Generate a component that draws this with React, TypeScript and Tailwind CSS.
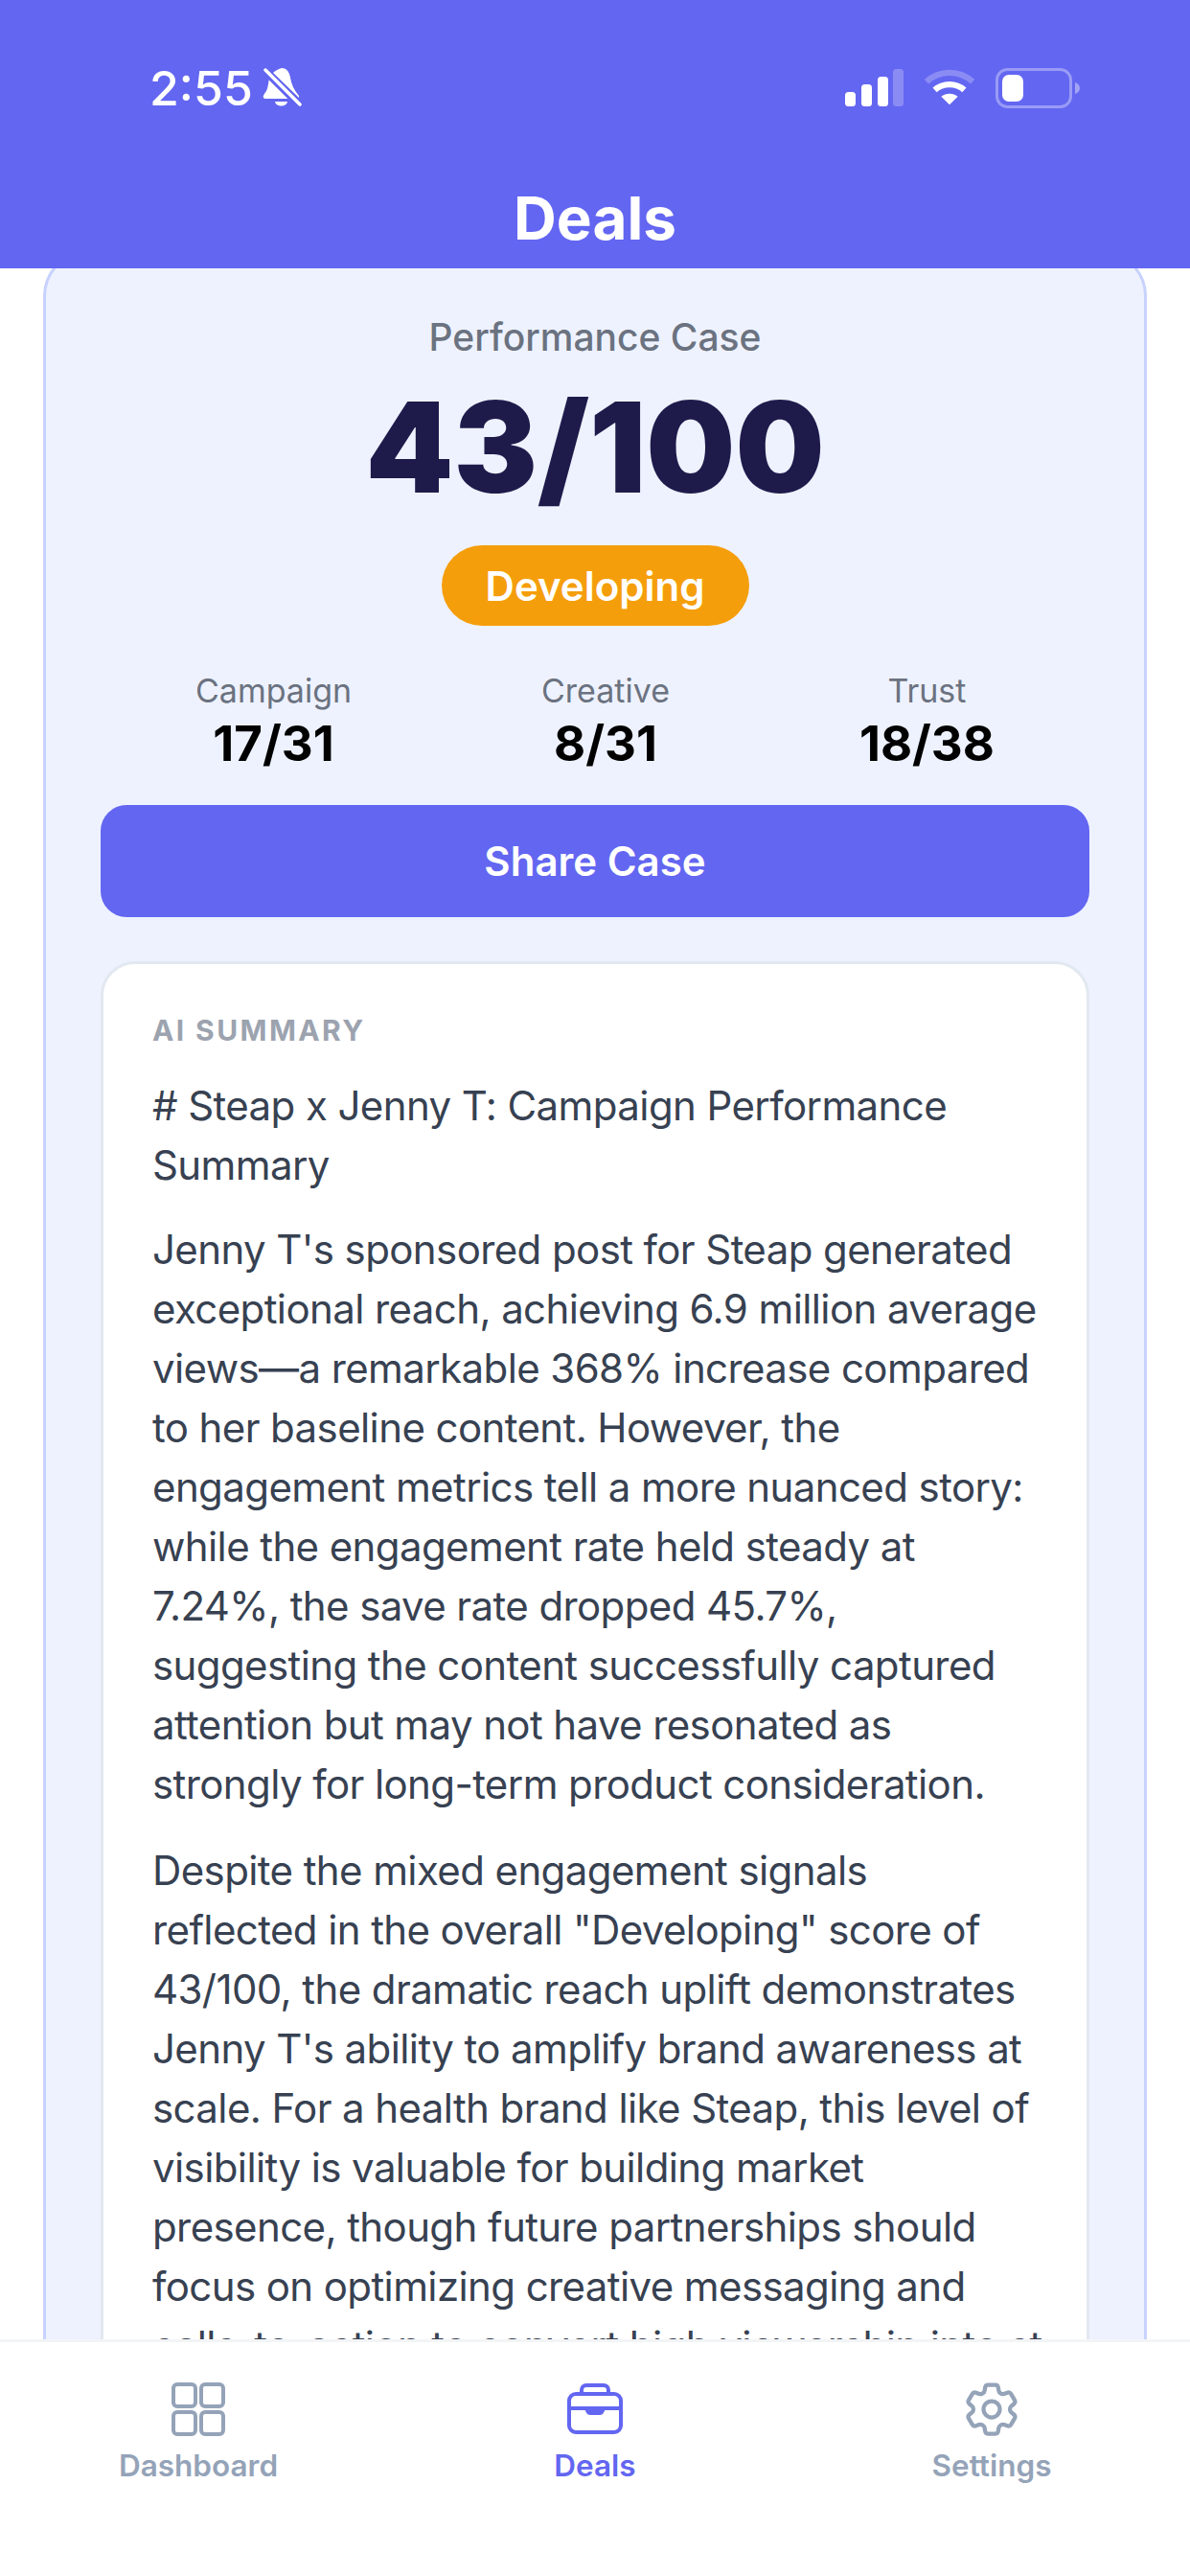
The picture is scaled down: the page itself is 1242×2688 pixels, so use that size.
import React from "react";
import { HiOutlineCog6Tooth } from "react-icons/hi2";

const p1 = "Jenny T's sponsored post for Steap generated exceptional reach, achieving 6.9 million average views—a remarkable 368% increase compared to her baseline content. However, the engagement metrics tell a more nuanced story: while the engagement rate held steady at 7.24%, the save rate dropped 45.7%, suggesting the content successfully captured attention but may not have resonated as strongly for long-term product consideration.";
const p2 = "Despite the mixed engagement signals reflected in the overall \"Developing\" score of 43/100, the dramatic reach uplift demonstrates Jenny T's ability to amplify brand awareness at scale. For a health brand like Steap, this level of visibility is valuable for building market presence, though future partnerships should focus on optimizing creative messaging and calls-to-action to convert high viewership into st";

function Stat({ label, value }: { label: string; value: string }) {
  return (
    <div className="flex flex-col items-center">
      <span className="text-[34px] leading-[40px] text-[#6b7280] mt-[2px]">{label}</span>
      <span className="text-[51px] leading-[62px] font-bold text-black mt-[4px]">{value}</span>
    </div>
  );
}

function Tab({ icon, label, active }: { icon: React.ReactNode; label: string; active?: boolean }) {
  return (
    <div className={`flex-1 flex flex-col items-center ${active ? "text-[#6366f1]" : "text-[#94a3b8]"}`}>
      <div className="h-[72px] flex items-center justify-center">{icon}</div>
      <span className="text-[31.5px] leading-[36px] font-semibold mt-[5px]">{label}</span>
    </div>
  );
}

function GridIcon() {
  return (
    <svg width="56" height="56" viewBox="0 0 56 56" fill="none" stroke="currentColor" strokeWidth="4">
      <rect x="2" y="2" width="23" height="23" rx="4" />
      <rect x="31" y="2" width="23" height="23" rx="4" />
      <rect x="2" y="31" width="23" height="23" rx="4" />
      <rect x="31" y="31" width="23" height="23" rx="4" />
    </svg>
  );
}

function CaseIcon() {
  return (
    <svg width="60" height="54" viewBox="0 0 60 54" fill="none" stroke="currentColor" strokeWidth="4">
      <rect x="3" y="11" width="54" height="40" rx="7" />
      <path d="M16 11 V7 C16 4 18 2 21 2 H39 C42 2 44 4 44 7 V11" />
      <path d="M3 26 H57" />
      <path d="M21 26 H39 L37 30 C36.5 31 36 31 35 31 H25 C24 31 23.5 31 23 30 Z" fill="currentColor" />
    </svg>
  );
}

export default function App() {
  return (
    <div className="w-[1242px] h-[2688px] flex flex-col overflow-hidden bg-white" style={{ fontFamily: "Inter, sans-serif" }}>
      <header className="relative z-10 h-[280px] shrink-0 bg-[#6366f1] text-white">
        <div className="flex items-center justify-between pl-[156px] pr-[114px] pt-[66px] h-[118px]">
          <div className="flex items-center gap-[10px]">
            <span className="text-[50px] leading-[52px] font-medium">2:55</span>
            <svg width="42" height="42" viewBox="0 0 42 42" fill="white">
              <path d="M7 11 C6 15 6 20 4 24 C2 27 0 29 1 31 C1.5 32 3 32 5 32 H27 Z" />
              <path d="M11 5 C13 3 16 1 20 0 C25 0 28 4 29 10 C30 17 33 23 38 29 L38 31 Z" />
              <path d="M13 35 H26 C25 41 14 41 13 35 Z" />
              <path d="M2 2 L40 40" stroke="#6366f1" strokeWidth="8" />
              <path d="M3 2 L39 38" stroke="white" strokeWidth="3.5" strokeLinecap="round" />
            </svg>
          </div>
          <div className="flex items-center gap-[21px]">
            <svg width="62" height="40" viewBox="0 0 62 40" fill="white">
              <rect x="1" y="24" width="11" height="15" rx="3.5" />
              <rect x="18" y="16" width="11" height="23" rx="3.5" />
              <rect x="35" y="8" width="11" height="31" rx="3.5" />
              <rect x="51" y="0" width="11" height="39" rx="3.5" opacity="0.25" />
            </svg>
            <svg width="54" height="40" viewBox="0 0 56 40" fill="none">
              <path d="M3 13 C17 0 39 0 53 13" stroke="white" strokeWidth="6.5" opacity="0.25" />
              <path d="M12 22 C21 14 35 14 44 22" stroke="white" strokeWidth="6.5" />
              <path d="M28 38 L19 29 C24 25 32 25 37 29 Z" fill="white" />
            </svg>
            <svg width="89" height="42" viewBox="0 0 89 42" fill="none">
              <rect x="1.5" y="1.5" width="77" height="39" rx="11" stroke="white" strokeWidth="3" opacity="0.35" />
              <rect x="7" y="7" width="22" height="28" rx="7" fill="white" />
              <path d="M83 15 C86 16 88 18 88 21 C88 24 86 26 83 27 Z" fill="white" opacity="0.4" />
            </svg>
          </div>
        </div>
        <div className="text-center text-[62px] leading-[72px] font-bold mt-[74px]">Deals</div>
      </header>
      <main className="flex-1 min-h-0 overflow-hidden px-[45px]">
        <div className="-mt-[19px] h-[2400px] rounded-[48px] border-[3px] border-[#c7d2fe] bg-[#eef2ff] px-[57px] pt-[64px]">
          <div className="text-center text-[39px] leading-[48px] font-medium text-[#6b7280]">Performance Case</div>
          <div className="text-center text-[131px] leading-[150px] font-black text-[#1e1b4b] mt-[16px]">43/100</div>
          <div className="flex justify-center mt-[27px]">
            <span className="h-[84px] w-[321px] rounded-full bg-[#f59e0b] flex items-center justify-center text-[42px] font-semibold text-white">Developing</span>
          </div>
          <div className="flex justify-around mt-[46px]">
            <Stat label="Campaign" value="17/31" />
            <Stat label="Creative" value="8/31" />
            <Stat label="Trust" value="18/38" />
          </div>
          <button className="w-full h-[117px] rounded-[27px] bg-[#6366f1] text-white text-[42px] font-semibold mt-[33px]">Share Case</button>
          <div className="mt-[46px] h-[1600px] rounded-[36px] border-[3px] border-[#e2e8f0] bg-white pl-[51px] pr-[36px] pt-[49px] text-[42px] leading-[62px] tracking-[-0.6px] text-[#374151]">
            <div className="text-[30px] leading-[40px] font-bold tracking-[2.4px] text-[#9ca3af]">AI SUMMARY</div>
            <p className="mt-[28px] pr-[15px]"># Steap x Jenny T: Campaign Performance Summary</p>
            <p className="mt-[26px] pr-[15px]">{p1}</p>
            <p className="mt-[28px]">
              Despite the mixed engagement signals
              <br />
              reflected in the overall "Developing" score of
              <br />
              43/100, the dramatic reach uplift demonstrates
              <br />
              Jenny T's ability to amplify brand awareness at
              <br />
              scale. For a health brand like Steap, this level of
              <br />
              visibility is valuable for building market
              <br />
              presence, though future partnerships should
              <br />
              focus on optimizing creative messaging and
              <br />
              calls-to-action to convert high viewership into st
            </p>
          </div>
        </div>
      </main>
      <nav className="relative z-10 h-[247px] shrink-0 border-t-[3px] border-[#f3f4f6] bg-white flex pt-[34px]">
        <Tab icon={<GridIcon />} label="Dashboard" />
        <Tab icon={<CaseIcon />} label="Deals" active />
        <Tab icon={<HiOutlineCog6Tooth size={68} />} label="Settings" />
      </nav>
    </div>
  );
}
